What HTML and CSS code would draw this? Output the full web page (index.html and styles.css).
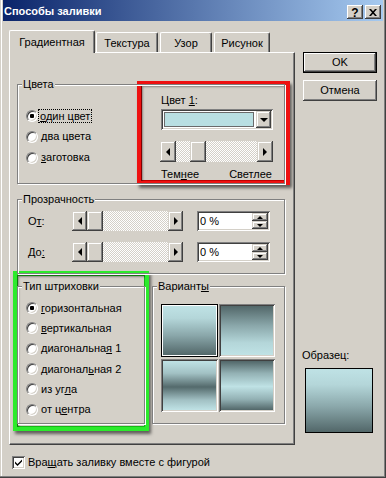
FILE: index.html
```html
<!DOCTYPE html>
<html lang="ru">
<head>
<meta charset="utf-8">
<title>Способы заливки</title>
<link rel="stylesheet" href="styles.css">
</head>
<body>
<div class="window">
  <div class="titlebar">
    <span class="title">Способы заливки</span>
    <div class="caption-btns">
      <span class="cbtn help">?</span>
      <span class="cbtn close"><svg width="8" height="7" viewBox="0 0 8 7"><path d="M0 0h2l2 2.3 2-2.3h2l-3 3.5 3 3.5h-2l-2-2.3-2 2.3h-2l3-3.5z" fill="#000"/></svg></span>
    </div>
  </div>

  <div class="body">
    <div class="main">
      <div class="tabs">
        <div class="tab active t1">Градиентная</div>
        <div class="tab t2">Текстура</div>
        <div class="tab t3">Узор</div>
        <div class="tab t4">Рисунок</div>
      </div>

      <div class="panel">
        <div class="group colors">
          <span class="gtitle">Цвета</span>
          <div class="colors-grid">
            <div class="radios">
              <div class="radio-row"><span class="radio checked"></span><span class="lbl focus"><u>о</u>дин цвет</span></div>
              <div class="radio-row"><span class="radio"></span><span class="lbl"><u>д</u>ва цвета</span></div>
              <div class="radio-row"><span class="radio"></span><span class="lbl"><u>з</u>аготовка</span></div>
            </div>
            <div class="picker">
              <div class="plabel">Цвет <u>1</u>:</div>
              <div class="combo">
                <span class="swatch"></span>
                <span class="combo-btn"><span class="tri-d"></span></span>
              </div>
              <div class="sb sb-color">
                <span class="sb-btn"><span class="tri-l"></span></span>
                <span class="sb-track"><span class="sb-thumb thumb-color"></span></span>
                <span class="sb-btn"><span class="tri-r"></span></span>
              </div>
              <div class="dl"><span>Тем<u>н</u>ее</span><span>Светлее</span></div>
            </div>
          </div>
        </div>

        <div class="group transp">
          <span class="gtitle">Прозрачность</span>
          <div class="trow">
            <span class="tlabel">О<u>т</u>:</span>
            <div class="sb sb-tr">
              <span class="sb-btn"><span class="tri-l"></span></span>
              <span class="sb-track"><span class="sb-thumb"></span></span>
              <span class="sb-btn"><span class="tri-r"></span></span>
            </div>
            <div class="spin">
              <span class="spin-text">0 %</span>
              <span class="spin-btns">
                <span class="spin-btn"><span class="tri-su"></span></span>
                <span class="spin-btn"><span class="tri-sd"></span></span>
              </span>
            </div>
          </div>
          <div class="trow">
            <span class="tlabel">До<u>:</u></span>
            <div class="sb sb-tr">
              <span class="sb-btn"><span class="tri-l"></span></span>
              <span class="sb-track"><span class="sb-thumb"></span></span>
              <span class="sb-btn"><span class="tri-r"></span></span>
            </div>
            <div class="spin">
              <span class="spin-text">0 %</span>
              <span class="spin-btns">
                <span class="spin-btn"><span class="tri-su"></span></span>
                <span class="spin-btn"><span class="tri-sd"></span></span>
              </span>
            </div>
          </div>
        </div>

        <div class="bottom-row">
          <div class="group hatch">
            <span class="gtitle">Тип штриховки</span>
            <div class="radios hatch-list">
              <div class="radio-row"><span class="radio checked"></span><span class="lbl"><u>г</u>оризонтальная</span></div>
              <div class="radio-row"><span class="radio"></span><span class="lbl"><u>в</u>ертикальная</span></div>
              <div class="radio-row"><span class="radio"></span><span class="lbl">диагональна<u>я</u> 1</span></div>
              <div class="radio-row"><span class="radio"></span><span class="lbl">диагонал<u>ь</u>ная 2</span></div>
              <div class="radio-row"><span class="radio"></span><span class="lbl">из уг<u>л</u>а</span></div>
              <div class="radio-row"><span class="radio"></span><span class="lbl">от ц<u>е</u>нтра</span></div>
            </div>
          </div>
          <div class="group variants">
            <span class="gtitle">Вариант<u>ы</u></span>
            <div class="tiles">
              <span class="tile sel"><span class="grad g1"></span></span>
              <span class="tile"><span class="grad g2"></span></span>
              <span class="tile"><span class="grad g3"></span></span>
              <span class="tile"><span class="grad g4"></span></span>
            </div>
          </div>
        </div>
      </div>

      <label class="chk-row">
        <span class="chk"><svg width="9" height="9" viewBox="0 0 9 9"><path d="M1 3.5l2.5 2.5 4.5-4.5v2l-4.5 4.5-2.5-2.5z" fill="#000"/></svg></span>
        <span>Вра<u>щ</u>ать заливку вместе с фигурой</span>
      </label>
    </div>

    <div class="side">
      <div class="btn default">OK</div>
      <div class="btn">Отмена</div>
      <div class="sample-label">Образец:</div>
      <div class="sample"></div>
    </div>
  </div>

  <div class="mark red"></div>
  <div class="mark green"></div>
</div>
</body>
</html>
```

FILE: styles.css
```css
* { box-sizing: border-box; }
html, body { margin: 0; padding: 0; }
body {
  width: 386px;
  height: 478px;
  overflow: hidden;
  background: #D4D0C8;
  font: 11px/13px "Liberation Sans", Arial, sans-serif;
  color: #000;
}
u { text-decoration-thickness: 1px; text-underline-offset: 1px; }

.window {
  position: relative;
  width: 386px;
  height: 478px;
  padding: 0 3px 3px 3px;
  background: #D4D0C8;
  box-shadow: inset -1px -1px #404040, inset -2px -2px #808080, inset 1px 0 #D4D0C8, inset 2px 0 #fff;
}

/* title bar */
.titlebar {
  display: flex;
  align-items: center;
  height: 21px;
  padding: 0 2px 0 1px;
  background: linear-gradient(to right, #0A246A, #A6CAF0);
}
.title { color: #fff; font-weight: bold; margin-top: 2px; }
.caption-btns { display: flex; gap: 2px; margin-left: auto; margin-top: 3px; }
.cbtn {
  width: 16px;
  height: 14px;
  display: flex;
  align-items: center;
  justify-content: center;
  background: #D4D0C8;
  box-shadow: inset -1px -1px #404040, inset 1px 1px #fff, inset -2px -2px #808080, inset 2px 2px #D4D0C8;
  font-weight: bold;
  font-size: 12px;
  line-height: 12px;
}
.cbtn.help { padding-top: 1px; }

/* body */
.body { display: flex; padding: 9px 6px 0 6px; }
.main { width: 286px; }
.side { width: 74px; margin-left: 8px; display: flex; flex-direction: column; }

/* tabs */
.tabs {
  position: relative;
  z-index: 2;
  display: flex;
  align-items: flex-end;
  height: 22px;
}
.tab {
  height: 20px;
  padding-top: 4px;
  text-align: center;
  background: #D4D0C8;
  border-top: 1px solid #fff;
  border-left: 1px solid #fff;
  border-right: 1px solid #404040;
  border-radius: 2px 2px 0 0;
  box-shadow: inset -1px 0 #808080;
}
.tab.active { height: 23px; margin-bottom: -1px; padding-top: 5px; }
.t1 { width: 86px; }
.t2 { width: 62px; margin-left: 1px; }
.t3 { width: 52px; margin-left: 2px; }
.t4 { width: 56px; margin-left: 2px; }

.panel {
  position: relative;
  z-index: 1;
  height: 393px;
  padding: 31px 0 0 7px;
  border-top: 1px solid #fff;
  border-left: 1px solid #fff;
  border-right: 1px solid #404040;
  border-bottom: 1px solid #404040;
  box-shadow: inset -1px -1px #808080;
}

/* group boxes */
.group {
  position: relative;
  border: 1px solid #808080;
  box-shadow: inset 1px 1px #fff, 1px 1px #fff;
}
.gtitle {
  position: absolute;
  top: -7px;
  left: 4px;
  padding: 0 1px;
  background: #D4D0C8;
  white-space: nowrap;
}
.colors { width: 268px; height: 100px; }
.colors-grid { display: grid; grid-template-columns: 143px 112px; }

.radios { padding: 20px 0 0 8px; }
.radio-row { display: flex; align-items: center; height: 21px; }
.radio {
  flex: none;
  position: relative;
  width: 12px;
  height: 12px;
  border-radius: 50%;
  background: #fff;
  border: 1px solid;
  border-color: #808080 #fff #fff #808080;
  box-shadow: inset 1px 1px #404040, inset -1px -1px #D4D0C8;
}
.radio.checked::after {
  content: "";
  position: absolute;
  left: 3px;
  top: 3px;
  width: 4px;
  height: 4px;
  border-radius: 1px;
  background: #000;
}
.lbl { margin-left: 3px; white-space: nowrap; }
.lbl.focus { margin-left: 1px; padding: 0 1px; outline: 1px dotted #000; outline-offset: 0; line-height: 12px; }

/* picker */
.picker { padding-top: 9px; }
.plabel { height: 13px; }
.combo {
  display: flex;
  align-items: stretch;
  height: 21px;
  margin-top: 2px;
  padding: 2px;
  background: #fff;
  box-shadow: inset 1px 1px #808080, inset -1px -1px #fff, inset 2px 2px #404040, inset -2px -2px #D4D0C8;
}
.swatch {
  flex: 1;
  margin: 1px 2px 1px 1px;
  background: #B9DFE2;
  border: 1px solid #6A6A6A;
}
.combo-btn {
  width: 15px;
  display: flex;
  align-items: center;
  justify-content: center;
  background: #D4D0C8;
  box-shadow: inset -1px -1px #404040, inset 1px 1px #D4D0C8, inset -2px -2px #808080, inset 2px 2px #fff;
}

/* scrollbar */
.sb { display: flex; }
.sb-color { height: 21px; width: 113px; margin: 11px 0 0 -1px; }
.sb-tr { height: 20px; width: 111px; }
.sb-btn {
  flex: none;
  width: 16px;
  display: flex;
  align-items: center;
  justify-content: center;
  background: #D4D0C8;
  box-shadow: inset -1px -1px #404040, inset 1px 1px #D4D0C8, inset -2px -2px #808080, inset 2px 2px #fff;
}
.sb-tr .sb-btn { width: 15px; }
.sb-track {
  flex: 1;
  display: flex;
  background: repeating-conic-gradient(#fff 0 25%, #D4D0C8 0 50%) 0 0 / 2px 2px;
}
.sb-thumb {
  width: 16px;
  background: #D4D0C8;
  box-shadow: inset -1px -1px #404040, inset 1px 1px #D4D0C8, inset -2px -2px #808080, inset 2px 2px #fff;
}
.thumb-color { margin-left: 14px; }

.tri-l, .tri-r, .tri-d, .tri-su, .tri-sd { width: 0; height: 0; border-style: solid; }
.tri-l { border-width: 4px 4px 4px 0; border-color: transparent #000 transparent transparent; }
.tri-r { border-width: 4px 0 4px 4px; border-color: transparent transparent transparent #000; }
.tri-d { border-width: 4px 4px 0 4px; border-color: #000 transparent transparent transparent; }
.tri-su { border-width: 0 3px 3px 3px; border-color: transparent transparent #000 transparent; }
.tri-sd { border-width: 3px 3px 0 3px; border-color: #000 transparent transparent transparent; }

.dl { display: flex; justify-content: space-between; margin-top: 6px; padding-right: 1px; }

/* transparency */
.transp { width: 268px; height: 75px; margin-top: 15px; padding: 11px 0 0 10px; }
.trow { display: flex; align-items: center; height: 20px; }
.trow + .trow { margin-top: 11px; }
.tlabel { width: 44px; }
.spin {
  display: flex;
  width: 73px;
  height: 20px;
  margin-left: 14px;
  padding: 2px;
  background: #fff;
  box-shadow: inset 1px 1px #808080, inset -1px -1px #fff, inset 2px 2px #404040, inset -2px -2px #D4D0C8;
}
.spin-text { flex: 1; padding-left: 1px; line-height: 16px; }
.spin-btns { display: flex; flex-direction: column; width: 16px; }
.spin-btn {
  height: 8px;
  display: flex;
  align-items: center;
  justify-content: center;
  background: #D4D0C8;
  box-shadow: inset -1px -1px #404040, inset 1px 1px #D4D0C8, inset -2px -2px #808080, inset 2px 2px #fff;
}

/* bottom row */
.bottom-row { display: flex; margin-top: 12px; }
.hatch { width: 128px; height: 138px; }
.hatch-list { padding-top: 11px; }
.hatch-list .radio-row { height: 20.3px; }
.variants { width: 133px; height: 138px; margin-left: 7px; padding: 17px 0 0 8px; }
.tiles {
  display: grid;
  grid-template-columns: 57px 56px;
  grid-template-rows: 53px 53px;
  column-gap: 1px;
  row-gap: 2px;
}
.tile {
  display: block;
  padding: 2px;
  box-shadow: inset 1px 1px #808080, inset -1px -1px #fff, inset 2px 2px #404040, inset -2px -2px #D4D0C8;
}
.tile.sel { padding: 2px; box-shadow: inset 0 0 0 1px #000, inset 0 0 0 2px #fff; }
.grad { display: block; width: 100%; height: 100%; }
.g1 { background: linear-gradient(#BFE2E5 0%, #B4D6D9 25%, #8AA7AA 60%, #526769 100%); }
.g2 { background: linear-gradient(#526769 0%, #8AA7AA 40%, #B4D6D9 75%, #BFE2E5 100%); }
.g3 { background: linear-gradient(#BFE2E5 0%, #A2C1C4 25%, #546A6C 53%, #A2C1C4 80%, #BFE2E5 100%); }
.g4 { background: linear-gradient(#526769 0%, #93B1B4 25%, #BFE2E5 52%, #93B1B4 78%, #526769 100%); }

/* checkbox */
.chk-row { display: flex; align-items: center; margin: 11px 0 0 3px; height: 13px; }
.chk {
  width: 13px;
  height: 13px;
  display: flex;
  align-items: center;
  justify-content: center;
  margin-right: 3px;
  background: #fff;
  box-shadow: inset 1px 1px #808080, inset -1px -1px #fff, inset 2px 2px #404040, inset -2px -2px #D4D0C8;
}

/* side buttons */
.btn {
  height: 21px;
  display: flex;
  align-items: center;
  justify-content: center;
  background: #D4D0C8;
  box-shadow: inset -1px -1px #404040, inset 1px 1px #fff, inset -2px -2px #808080, inset 2px 2px #D4D0C8;
}
.btn.default {
  margin-top: 22px;
  box-shadow: inset 0 0 0 1px #000, inset -2px -2px #404040, inset 2px 2px #fff, inset -3px -3px #808080;
}
.btn + .btn { margin-top: 7px; }
.sample-label { margin: 248px 0 0 -1px; height: 13px; }
.sample {
  width: 68px;
  height: 65px;
  margin: 6px 0 0 2px;
  border: 1px solid #000;
  background: linear-gradient(#BFE2E5 0%, #B4D6D9 25%, #8AA7AA 60%, #526769 100%);
}

/* annotation rectangles drawn over the dialog */
.mark { position: absolute; pointer-events: none; }
.mark.red {
  left: 137px; top: 81px; width: 153px; height: 104px;
  border: 4px solid #EE1111;
  box-shadow: 2px 3px 3px rgba(0,0,0,.55), inset 2px 2px 2px rgba(0,0,0,.35), inset 0 0 0 1px #C00000;
}
.mark.green {
  left: 13px; top: 271px; width: 136px; height: 160px;
  border: 4px solid #2CEB2C;
  box-shadow: 2px 3px 3px rgba(0,0,0,.55), inset 2px 2px 2px rgba(0,0,0,.35), inset 0 0 0 1px #18B818;
}
```
